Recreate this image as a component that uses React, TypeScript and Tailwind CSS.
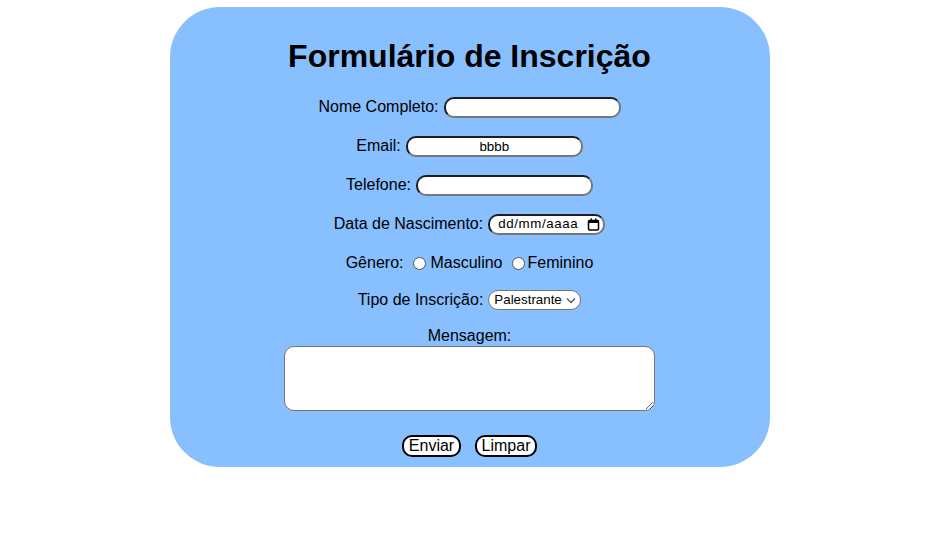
import React from "react";

const inputCls =
  "h-[21px] rounded-[10px] border-2 border-t-[#1e1e1e] border-l-[#1e1e1e] border-b-[#777] border-r-[#777] bg-white px-[2px] text-[13.33px] text-center outline-none";

export default function App() {
  return (
    <div className="w-full min-h-[535px] bg-white flex justify-center pt-[7px] pl-[13px] [font-family:'Liberation_Sans',Arial,sans-serif] text-black">
      <div className="w-[600px] h-[460px] rounded-[50px] bg-[#88bfff] flex flex-col items-center">
        <h1 className="mt-[31px] h-[37px] leading-[37px] text-[32px] font-bold">Formulário de Inscrição</h1>

        <div className="mt-[21px] h-[22px] flex items-center gap-[5px] text-[16px]">
          <span>Nome Completo:</span>
          <input className={inputCls + " w-[177px]"} />
        </div>

        <div className="mt-[17px] h-[22px] flex items-center gap-[5px] text-[16px]">
          <span>Email:</span>
          <input className={inputCls + " w-[177px]"} defaultValue="bbbb" />
        </div>

        <div className="mt-[17px] h-[22px] flex items-center gap-[5px] text-[16px]">
          <span>Telefone:</span>
          <input className={inputCls + " w-[177px]"} />
        </div>

        <div className="mt-[17px] h-[22px] flex items-center gap-[5px] text-[16px]">
          <span>Data de Nascimento:</span>
          <div className="h-[21px] w-[117px] rounded-[10px] border-2 border-t-[#1e1e1e] border-l-[#1e1e1e] border-b-[#777] border-r-[#777] bg-white flex items-center justify-between pl-[8px] pr-[3px] text-[13.33px] tracking-[0.6px]">
            <span>dd/mm/aaaa</span>
            <svg width="13" height="13" viewBox="0 0 13 13" fill="none">
              <rect x="1.5" y="2.5" width="10" height="9.5" rx="1" stroke="#000" strokeWidth="1.5" />
              <rect x="1.5" y="2.5" width="10" height="2.5" fill="#000" />
              <rect x="3.5" y="0.5" width="1.5" height="3" fill="#000" />
              <rect x="8" y="0.5" width="1.5" height="3" fill="#000" />
            </svg>
          </div>
        </div>

        <div className="mt-[17px] h-[22px] flex items-center text-[16px]">
          <span>Gênero:</span>
          <span className="w-[10px]" />
          <span className="w-[13px] h-[13px] rounded-full border border-[#555] bg-white mr-[4px]" />
          <span>Masculino</span>
          <span className="w-[9px]" />
          <span className="w-[13px] h-[13px] rounded-full border border-[#555] bg-white mr-[3px]" />
          <span>Feminino</span>
        </div>

        <div className="mt-[15px] h-[22px] flex items-center gap-[5px] text-[16px]">
          <span>Tipo de Inscrição:</span>
          <div className="h-[20px] w-[93px] rounded-[10px] border border-[#767676] bg-white flex items-center justify-between pl-[5px] pr-[4px] text-[13.33px]">
            <span>Palestrante</span>
            <svg width="10" height="7" viewBox="0 0 10 7" fill="none">
              <path d="M1 1.5 L5 5.5 L9 1.5" stroke="#555" strokeWidth="1.3" />
            </svg>
          </div>
        </div>

        <div className="mt-[16px] h-[18px] leading-[18px] text-[16px]">Mensagem:</div>
        <textarea className="mt-[1px] w-[371px] h-[65px] rounded-[10px] border border-[#767676] bg-white resize block" />

        <div className="mt-[24px] flex items-center gap-[14px] text-[16px]">
          <button className="h-[22px] w-[59px] rounded-[10px] border-2 border-black bg-white leading-none">Enviar</button>
          <button className="h-[22px] w-[62px] rounded-[10px] border-2 border-black bg-white leading-none">Limpar</button>
        </div>
      </div>
    </div>
  );
}
